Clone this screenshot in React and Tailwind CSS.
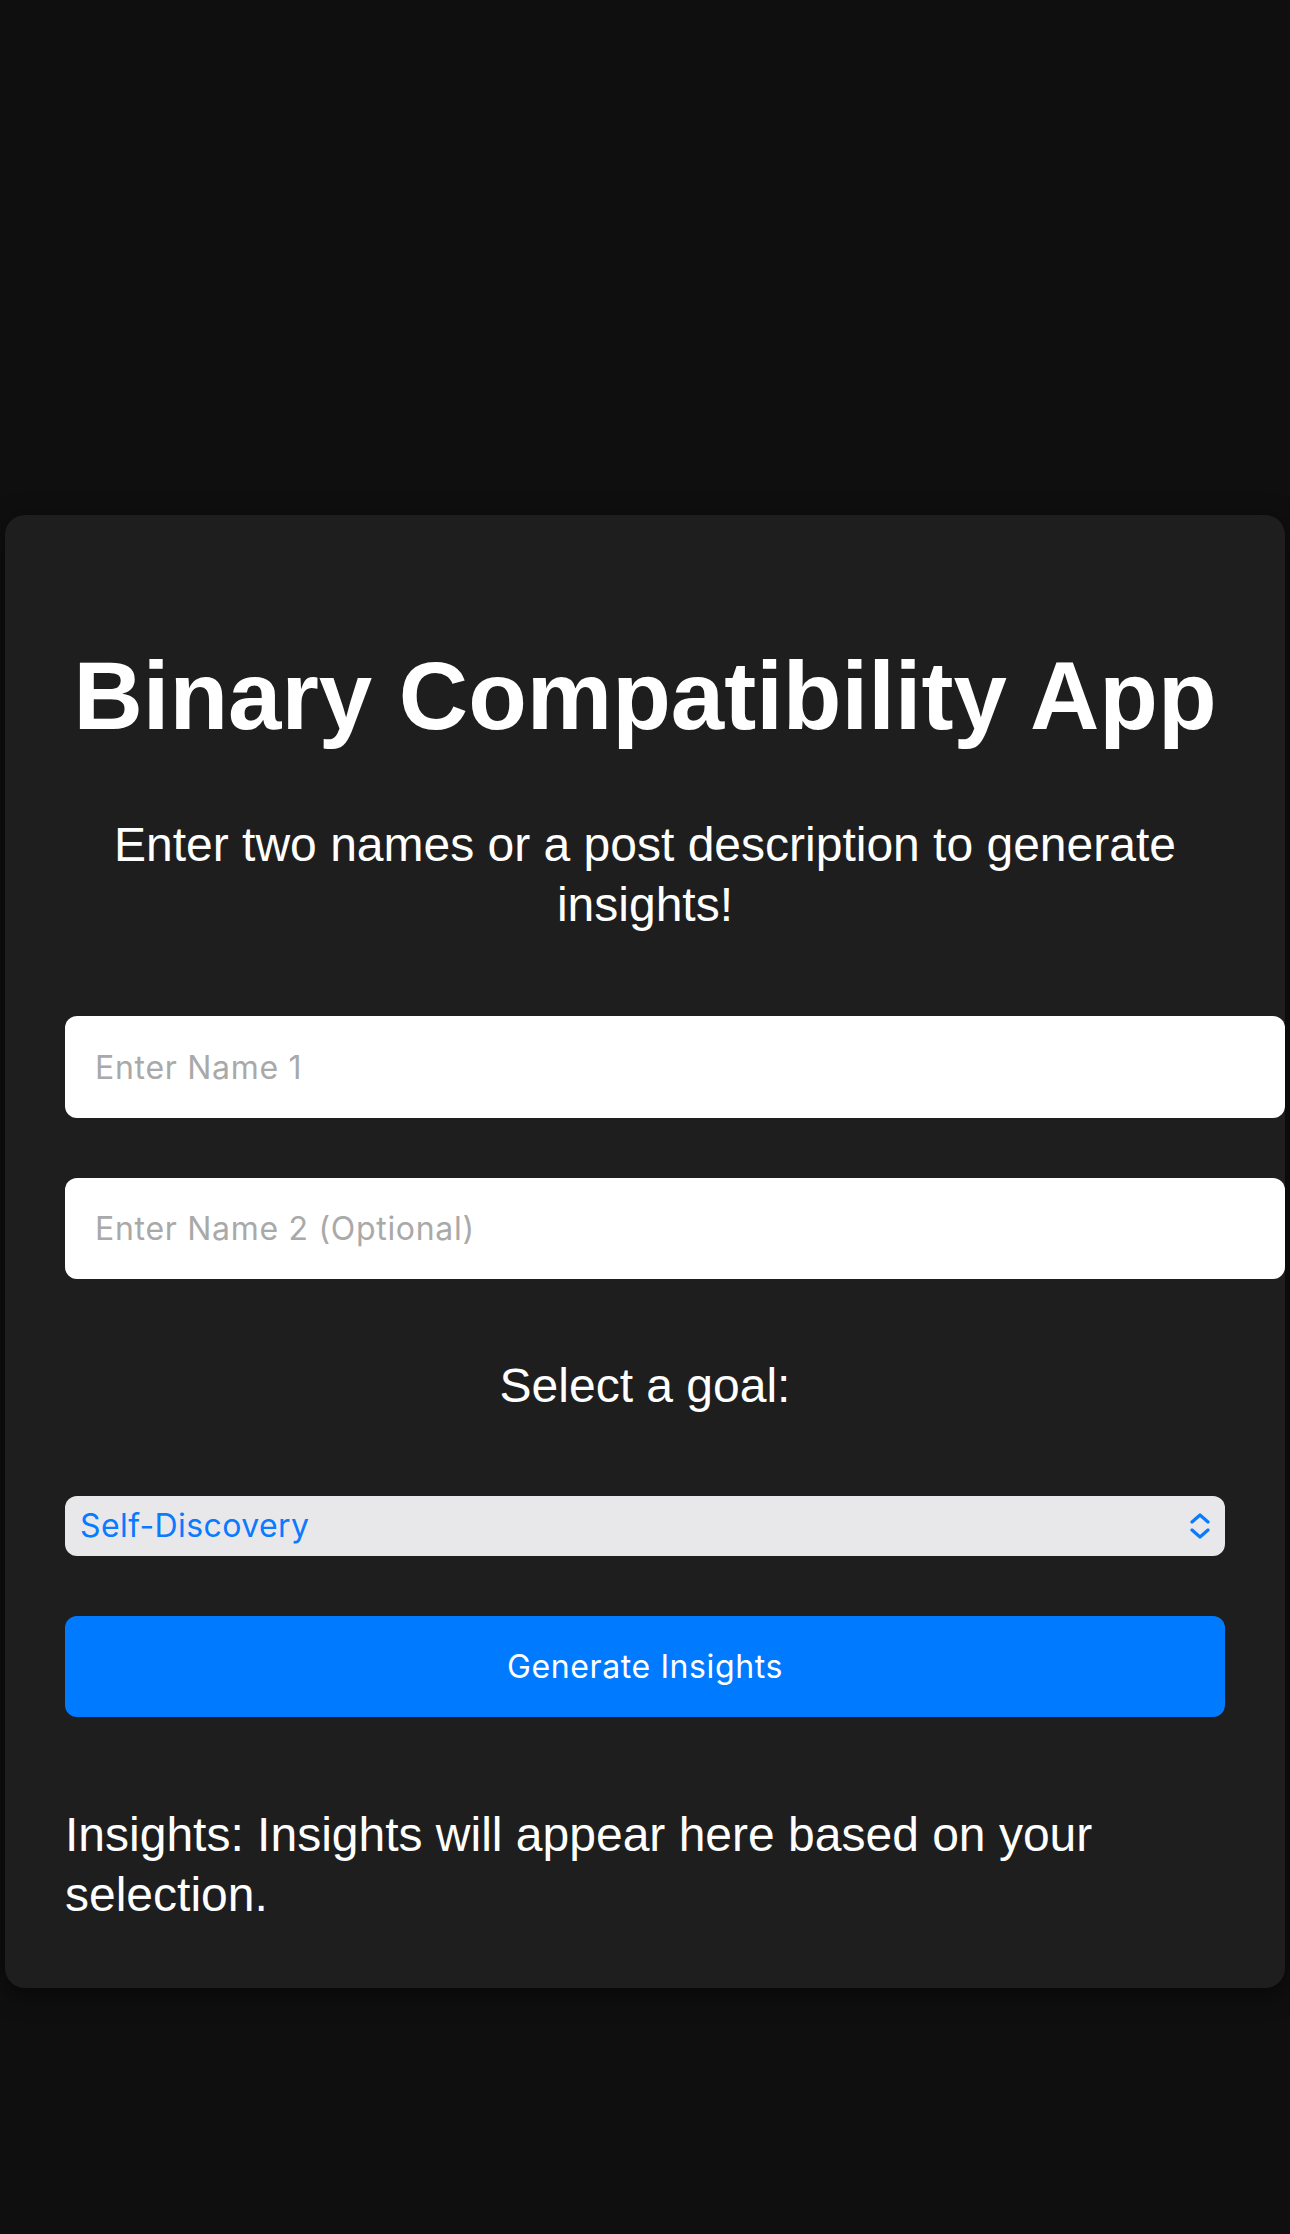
import React, { useState } from "react";

function ChevronUpDown() {
  return (
    <svg width="22" height="26" viewBox="0 0 22 26" fill="none">
      <path d="M3 9 L11 2 L19 9" stroke="#0a7aff" strokeWidth="3.2" strokeLinecap="round" strokeLinejoin="round" />
      <path d="M3 17 L11 24 L19 17" stroke="#0a7aff" strokeWidth="3.2" strokeLinecap="round" strokeLinejoin="round" />
    </svg>
  );
}

export default function App() {
  const [name1, setName1] = useState("");
  const [name2, setName2] = useState("");
  const [goal] = useState("Self-Discovery");

  return (
    <div className="min-h-[2234px] bg-[#0f0f0f] pt-[515px] font-['Liberation_Sans',Arial,sans-serif] text-white">
      <div className="mx-[5px] flex flex-col rounded-[20px] bg-[#1e1e1e] px-[60px] pb-[63px] pt-[60px] shadow-[0_6px_24px_rgba(0,0,0,0.55)]">
        <h1 className="mt-[66px] text-center text-[96px] font-bold leading-[110px]">
          Binary Compatibility App
        </h1>

        <p className="mt-[64px] text-center text-[48px] leading-[60px]">
          Enter two names or a post description to generate insights!
        </p>

        <input
          type="text"
          value={name1}
          onChange={(e) => setName1(e.target.value)}
          placeholder="Enter Name 1"
          className="mt-[81px] box-content h-[102px] w-full rounded-[12px] bg-white px-[30px] font-['Inter',sans-serif] text-[32px] tracking-[0.7px] text-black outline-none placeholder:text-[#a9a9a9]"
        />
        <input
          type="text"
          value={name2}
          onChange={(e) => setName2(e.target.value)}
          placeholder="Enter Name 2 (Optional)"
          className="mt-[60px] box-content h-[101px] w-full rounded-[12px] bg-white px-[30px] font-['Inter',sans-serif] text-[32px] tracking-[0.7px] text-black outline-none placeholder:text-[#a9a9a9]"
        />

        <label className="mt-[77px] text-center text-[48px] leading-[60px]">Select a goal:</label>

        <div className="mt-[80px] flex h-[60px] items-center justify-between rounded-[12px] bg-[#e8e8ea] pl-[15px] pr-[14px] font-['Inter',sans-serif] text-[32px] tracking-[0.4px] text-[#0a7aff]">
          <span>{goal}</span>
          <ChevronUpDown />
        </div>

        <button className="mt-[60px] h-[101px] rounded-[12px] bg-[#007aff] font-['Inter',sans-serif] text-[32px] tracking-[0.6px] text-white">
          Generate Insights
        </button>

        <p className="mt-[88px] text-[48px] leading-[60px]">
          Insights: Insights will appear here based on your selection.
        </p>
      </div>
    </div>
  );
}
